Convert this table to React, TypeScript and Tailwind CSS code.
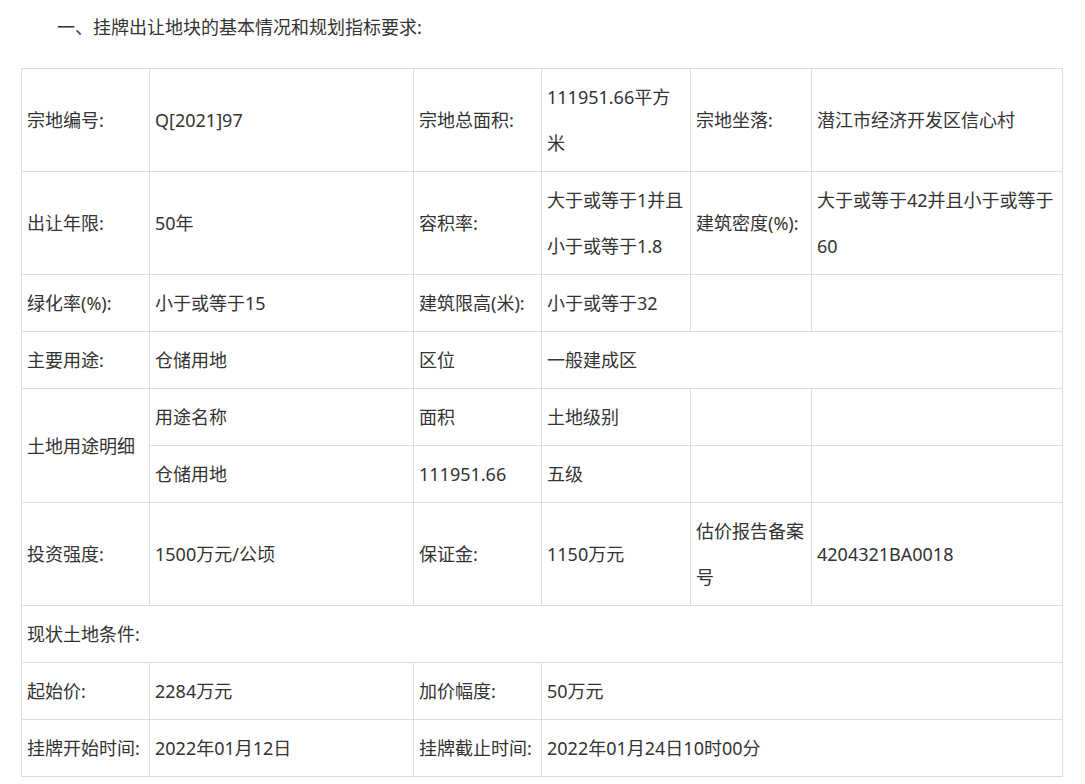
import React from "react";

const cell =
  "border-r border-b border-[#dddddd] px-[5px] py-[5px] flex flex-col justify-center leading-[46px]";

function C({ children, className = "" }: { children?: React.ReactNode; className?: string }) {
  return <div className={`${cell} ${className}`}>{children ?? "\u00a0"}</div>;
}

export default function App() {
  return (
    <div
      className="w-[1085px] min-h-[784px] bg-white text-[#333333] text-[18px] px-[21px]"
      style={{ fontFamily: '"Noto Sans", "Noto Sans CJK SC", sans-serif' }}
    >
      <p className="pt-[4px] leading-[46px] mb-[18px] indent-[36px]">一、挂牌出让地块的基本情况和规划指标要求:</p>
      <div className="grid grid-cols-[128px_264px_128px_149px_121px_251px] border-l border-t border-[#dddddd] w-[1042px]">
        <C>宗地编号:</C>
        <C>Q[2021]97</C>
        <C>宗地总面积:</C>
        <C>111951.66平方米</C>
        <C>宗地坐落:</C>
        <C>潜江市经济开发区信心村</C>

        <C>出让年限:</C>
        <C>50年</C>
        <C>容积率:</C>
        <C>大于或等于1并且小于或等于1.8</C>
        <C>建筑密度(%):</C>
        <C>大于或等于42并且小于或等于60</C>

        <C>绿化率(%):</C>
        <C>小于或等于15</C>
        <C>建筑限高(米):</C>
        <C>小于或等于32</C>
        <C />
        <C />

        <C>主要用途:</C>
        <C>仓储用地</C>
        <C>区位</C>
        <C className="col-span-3">一般建成区</C>

        <C className="row-span-2">土地用途明细</C>
        <C>用途名称</C>
        <C>面积</C>
        <C>土地级别</C>
        <C />
        <C />
        <C>仓储用地</C>
        <C>111951.66</C>
        <C>五级</C>
        <C />
        <C />

        <C>投资强度:</C>
        <C>1500万元/公顷</C>
        <C>保证金:</C>
        <C>1150万元</C>
        <C>估价报告备案号</C>
        <C>4204321BA0018</C>

        <C className="col-span-6">现状土地条件:</C>

        <C>起始价:</C>
        <C>2284万元</C>
        <C>加价幅度:</C>
        <C className="col-span-3">50万元</C>

        <C>挂牌开始时间:</C>
        <C>2022年01月12日</C>
        <C>挂牌截止时间:</C>
        <C className="col-span-3">2022年01月24日10时00分</C>
      </div>
    </div>
  );
}
